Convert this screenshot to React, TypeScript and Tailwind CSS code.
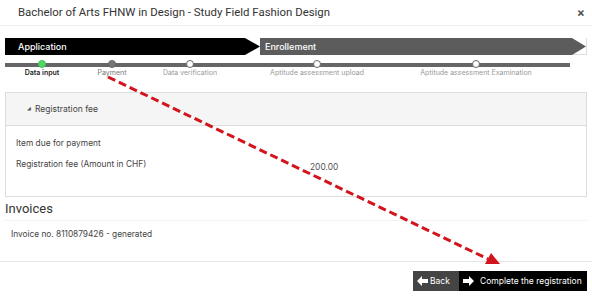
import React from "react";

const steps = [
  { label: "Data input", w: 74, dot: "green" },
  { label: "Payment", w: 66, dot: "gray" },
  { label: "Data verification", w: 90, dot: "white" },
  { label: "Aptitude assessment upload", w: 164, dot: "white" },
  { label: "Aptitude assessment Examination", w: 154, dot: "white" },
];

function ArrowLeftIcon() {
  return (
    <svg width="11" height="10" viewBox="0 0 11 10" fill="white">
      <path d="M0 5 L5 0 L5 3 L11 3 L11 7 L5 7 L5 10 Z" />
    </svg>
  );
}
function ArrowRightIcon() {
  return (
    <svg width="11" height="10" viewBox="0 0 11 10" fill="white">
      <path d="M11 5 L6 0 L6 3 L0 3 L0 7 L6 7 L6 10 Z" />
    </svg>
  );
}

export default function App() {
  return (
    <div className="relative w-[592px] h-[296px] bg-white overflow-hidden font-['Inter',sans-serif] text-[#333]">
      {/* Header */}
      <div className="flex items-center justify-between h-[26px] pl-[18px] pr-[7px] border-b border-[#f0f0f0]">
        <span className="font-['Roboto',sans-serif] text-[11.4px] text-[#333] leading-none">Bachelor of Arts FHNW in Design - Study Field Fashion Design</span>
        <span className="text-[12px] text-[#555] leading-none font-bold">×</span>
      </div>

      <div className="px-[5px]">
        {/* Step bar */}
        <div className="mt-[12px] flex h-[17px]">
          <div className="w-[240px] bg-black flex items-center pl-[13px] text-white text-[9px] font-medium">Application</div>
          <svg width="15" height="17" viewBox="0 0 15 17"><path d="M0 0 L15 8.5 L0 17 Z" fill="black" /></svg>
          <div className="flex-1 bg-[#5c5c5c] flex items-center pl-[5px] text-white text-[9px] font-medium">Enrollement</div>
          <div className="relative w-[15px] h-[17px] border-r border-b border-[#ddd]">
            <svg width="14" height="17" viewBox="0 0 14 17" className="absolute left-0 top-0"><path d="M0 0 L14 8.5 L0 17 Z" fill="#5c5c5c" /></svg>
          </div>
        </div>

        {/* Progress */}
        <div className="relative mt-[8px] w-[565px]">
          <div className="h-[4px] bg-[#666] mt-[2px]" />
          <div className="flex -mt-[7px]">
            {steps.map((s) => (
              <div key={s.label} className="flex flex-col items-center shrink-0" style={{ width: s.w }}>
                <div
                  className={
                    s.dot === "green"
                      ? "w-[8px] h-[8px] rounded-full bg-[#4cd964] border border-[#3fc256]"
                      : s.dot === "gray"
                      ? "w-[8px] h-[8px] rounded-full bg-[#777] border border-[#666]"
                      : "w-[8px] h-[8px] rounded-full bg-white border border-[#666]"
                  }
                />
                <span
                  className={
                    "text-[7px] leading-[9px] whitespace-nowrap " +
                    (s.dot === "green" ? "text-[#222] font-semibold" : s.dot === "gray" ? "text-[#777]" : "text-[#999]")
                  }
                >
                  {s.label}
                </span>
              </div>
            ))}
          </div>
        </div>

        {/* Panel */}
        <div className="mt-[15px] border border-[#ddd] h-[105px]">
          <div className="h-[33px] bg-[#f5f5f5] border-b border-[#ddd] flex items-center pl-[21px] text-[8.5px] text-[#444]">
            <span className="text-[5px] mr-[4px] text-[#555]">◢</span>
            Registration fee
          </div>
          <div className="pl-[10px] pt-[10px] text-[8.4px] text-[#444]">
            <div className="h-[14px] leading-[14px]">Item due for payment</div>
            <div className="flex h-[14px] leading-[14px] mt-[7px]">
              <span className="w-[294px]">Registration fee (Amount in CHF)</span>
              <span className="mt-[3px] text-[#555]">200.00</span>
            </div>
          </div>
        </div>

        {/* Invoices */}
        <div className="font-['Roboto',sans-serif] text-[13px] leading-[18px] text-[#333] mt-[3px]">Invoices</div>
        <div className="border-t border-[#f2f2f2] mt-[2px] pl-[6px] pt-[7px] text-[8.3px] text-[#444] h-[41px]">
          Invoice no. 8110879426 - generated
        </div>
      </div>

      {/* Footer */}
      <div className="border-t border-[#e5e5e5] flex justify-end pr-[5px] pt-[9px]">
        <div className="flex h-[20px] text-white text-[8.5px]">
          <div className="flex items-center w-[46px] bg-[#444] pl-[4px] gap-[2px]">
            <ArrowLeftIcon />
            <span>Back</span>
          </div>
          <div className="flex items-center w-[128px] bg-black pl-[4px] gap-[6px] whitespace-nowrap">
            <ArrowRightIcon />
            <span>Complete the registration</span>
          </div>
        </div>
      </div>

      {/* Red dashed annotation arrow */}
      <svg className="absolute left-0 top-0 pointer-events-none" width="592" height="296" viewBox="0 0 592 296">
        <line x1="108" y1="77" x2="488" y2="259" stroke="#d4141c" strokeWidth="3" strokeDasharray="8 4" />
        <path d="M500 264 L485 264 L491 253 Z" fill="#d4141c" />
      </svg>
    </div>
  );
}
